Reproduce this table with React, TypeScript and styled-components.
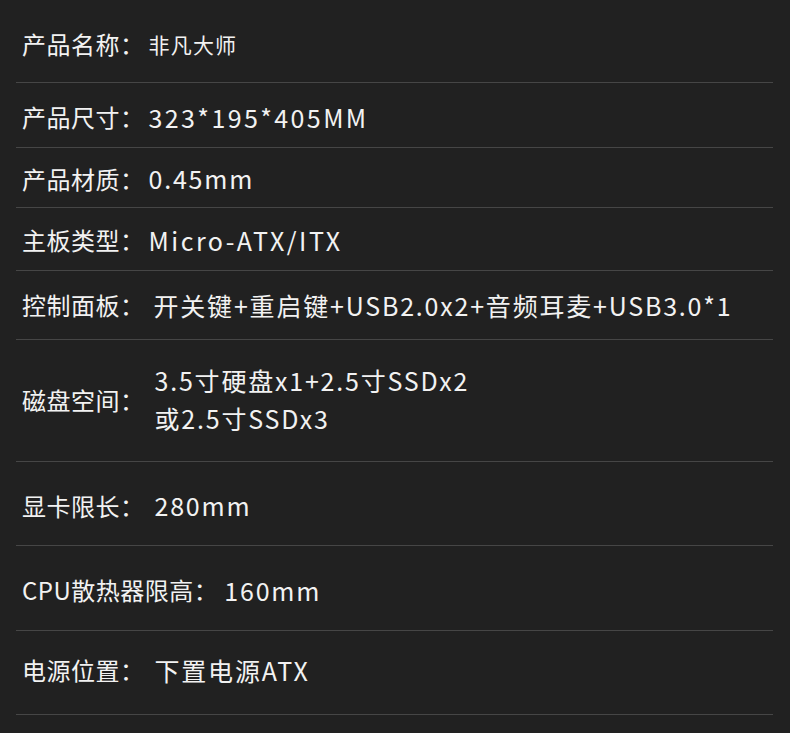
import React from 'react';
import styled, { createGlobalStyle } from 'styled-components';

const GlobalStyle = createGlobalStyle`
  html, body {
    margin: 0;
    padding: 0;
    background: #212121;
  }
  body {
    font-family: "Noto Sans CJK SC", "Noto Sans", sans-serif;
    color: #f2f2f2;
  }
`;

const Page = styled.div`
  width: 790px;
  height: 733px;
  background: #212121;
  overflow: hidden;
`;

// $shift > 0 pushes the text down, < 0 lifts it up
const Row = styled.div<{ $h: number; $shift?: number }>`
  display: flex;
  align-items: center;
  height: ${(p) => p.$h}px;
  margin: 0 17px 0 16px;
  padding-left: 6px;
  padding-top: ${(p) => Math.max(p.$shift || 0, 0)}px;
  padding-bottom: ${(p) => Math.max(-(p.$shift || 0), 0)}px;
  box-sizing: border-box;
  border-bottom: 1.5px solid #464646;
`;

const Label = styled.span`
  font-size: 24px;
  letter-spacing: 0.5px;
  white-space: nowrap;
`;

const Value = styled.div<{ $size?: number; $gap?: number; $ls?: number }>`
  font-size: ${(p) => p.$size || 25}px;
  letter-spacing: ${(p) => (p.$ls === undefined ? 1.8 : p.$ls)}px;
  margin-left: ${(p) => p.$gap || 0}px;
  line-height: 38px;
  white-space: nowrap;
`;

const specs = [
  { label: '产品名称：', value: ['非凡大师'], h: 83, size: 21, ls: 1.2, gap: 4, shift: 5 },
  { label: '产品尺寸：', value: ['323*195*405MM'], h: 65, gap: 4, ls: 2.4, shift: 3 },
  { label: '产品材质：', value: ['0.45mm'], h: 60, gap: 4, shift: 1 },
  { label: '主板类型：', value: ['Micro-ATX/ITX'], h: 63, gap: 4, ls: 2.5, shift: 1 },
  { label: '控制面板：', value: ['开关键+重启键+USB2.0x2+音频耳麦+USB3.0*1'], h: 69, gap: 9, shift: -1 },
  { label: '磁盘空间：', value: ['3.5寸硬盘x1+2.5寸SSDx2', '或2.5寸SSDx3'], h: 122, gap: 10, shift: -3 },
  { label: '显卡限长：', value: ['280mm'], h: 84, gap: 10, shift: 3 },
  { label: 'CPU散热器限高：', value: ['160mm'], h: 85, gap: 6, shift: 3 },
  { label: '电源位置：', value: ['下置电源ATX'], h: 84, gap: 10, shift: -6 },
];

export default function App() {
  return (
    <Page>
      <GlobalStyle />
      {specs.map((s) => (
        <Row key={s.label} $h={s.h} $shift={s.shift}>
          <Label>{s.label}</Label>
          <Value $size={s.size} $gap={s.gap} $ls={s.ls}>
            {s.value.map((v) => (
              <div key={v}>{v}</div>
            ))}
          </Value>
        </Row>
      ))}
    </Page>
  );
}
